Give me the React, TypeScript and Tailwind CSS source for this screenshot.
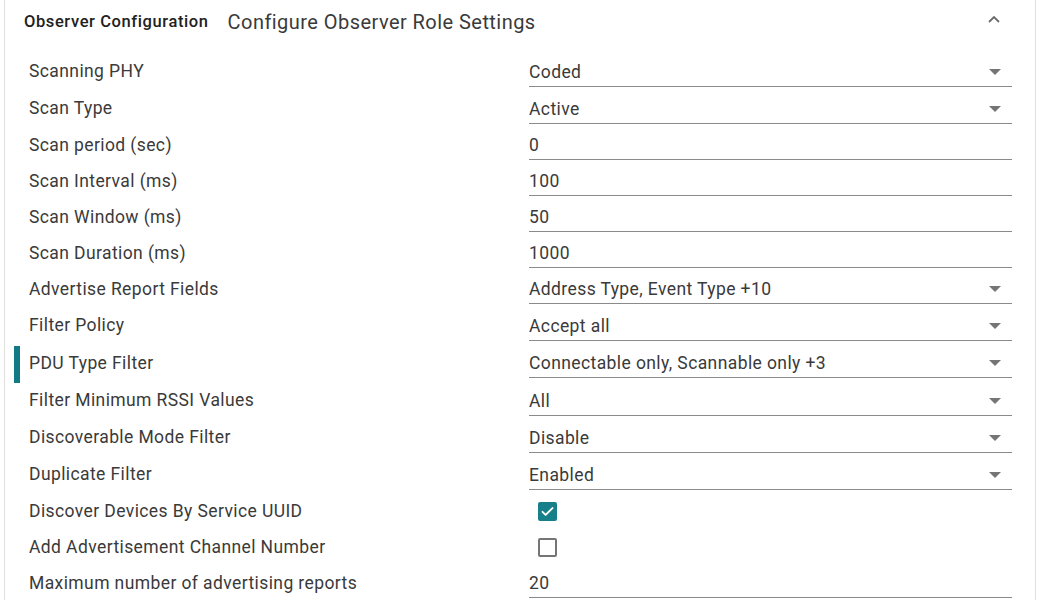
import { useState } from 'react'

type Row = {
  label: string
  kind: 'select' | 'input' | 'check'
  value?: string
  checked?: boolean
  h: number
  active?: boolean
}

const rows: Row[] = [
  { label: 'Scanning PHY', kind: 'select', value: 'Coded', h: 37 },
  { label: 'Scan Type', kind: 'select', value: 'Active', h: 37 },
  { label: 'Scan period (sec)', kind: 'input', value: '0', h: 36 },
  { label: 'Scan Interval (ms)', kind: 'input', value: '100', h: 36 },
  { label: 'Scan Window (ms)', kind: 'input', value: '50', h: 36 },
  { label: 'Scan Duration (ms)', kind: 'input', value: '1000', h: 36 },
  { label: 'Advertise Report Fields', kind: 'select', value: 'Address Type, Event Type +10', h: 36 },
  { label: 'Filter Policy', kind: 'select', value: 'Accept all', h: 37 },
  { label: 'PDU Type Filter', kind: 'select', value: 'Connectable only, Scannable only +3', h: 38, active: true },
  { label: 'Filter Minimum RSSI Values', kind: 'select', value: 'All', h: 37 },
  { label: 'Discoverable Mode Filter', kind: 'select', value: 'Disable', h: 37 },
  { label: 'Duplicate Filter', kind: 'select', value: 'Enabled', h: 37 },
  { label: 'Discover Devices By Service UUID', kind: 'check', checked: true, h: 36 },
  { label: 'Add Advertisement Channel Number', kind: 'check', checked: false, h: 36 },
  { label: 'Maximum number of advertising reports', kind: 'input', value: '20', h: 36 },
]

function Field({ row }: { row: Row }) {
  if (row.kind === 'check') {
    return (
      <div className="h-[29px] flex items-center pl-[9px]">
        {row.checked ? (
          <span className="w-[19px] h-[19px] rounded-[2px] bg-[#177f8a] flex items-center justify-center">
            <svg width="15" height="15" viewBox="0 0 24 24" fill="none" stroke="white" strokeWidth="3" strokeLinecap="round" strokeLinejoin="round">
              <path d="M4 12.5l5 5L20 6.5" />
            </svg>
          </span>
        ) : (
          <span className="w-[19px] h-[19px] rounded-[2px] border-2 border-[#757575]" />
        )}
      </div>
    )
  }
  return (
    <div className="h-[29px] flex items-center border-b border-[#8a8a8a] pt-[1px]">
      <span className="flex-1 truncate">{row.value}</span>
      {row.kind === 'select' && (
        <svg width="12" height="6" viewBox="0 0 12 6" className="mr-[11px] mb-[1px]">
          <path d="M0 0h12L6 6z" fill="#757575" />
        </svg>
      )}
    </div>
  )
}

export default function App() {
  const [open] = useState(true)
  return (
    <div className="w-[1040px] h-[600px] overflow-hidden bg-white pl-[4px] pr-[4px] text-[#3a3a3a]" style={{ fontFamily: 'Roboto, "Liberation Sans", sans-serif' }}>
      <div className="h-full border-l border-r border-[#e0e0e0]">
        <div className="h-[44px] flex items-center pl-[19px] pr-[34px]">
          <span className="text-[16.5px] tracking-[0.6px] font-medium text-[#212121]">Observer Configuration</span>
          <span className="ml-[19px] text-[20px] tracking-[0.45px] text-[#3a3a3a]">Configure Observer Role Settings</span>
          <span className="flex-1" />
          {open && (
            <svg width="14" height="10" viewBox="0 0 14 10" className="mb-[6px]">
              <path d="M2 8l5-5 5 5" fill="none" stroke="#6b6b6b" strokeWidth="1.8" />
            </svg>
          )}
        </div>
        <div className="pt-[9px]">
          {rows.map((r) => (
            <div key={r.label} className="relative flex items-center text-[17.5px] tracking-[0.4px]" style={{ height: r.h }}>
              {r.active && <span className="absolute left-[9px] top-[2px] bottom-[-1px] w-[6px] bg-[#127a84]" />}
              <div className="w-[524px] pl-[24px]">{r.label}</div>
              <div className="w-[483px] mt-[1px]">
                <Field row={r} />
              </div>
            </div>
          ))}
        </div>
      </div>
    </div>
  )
}
